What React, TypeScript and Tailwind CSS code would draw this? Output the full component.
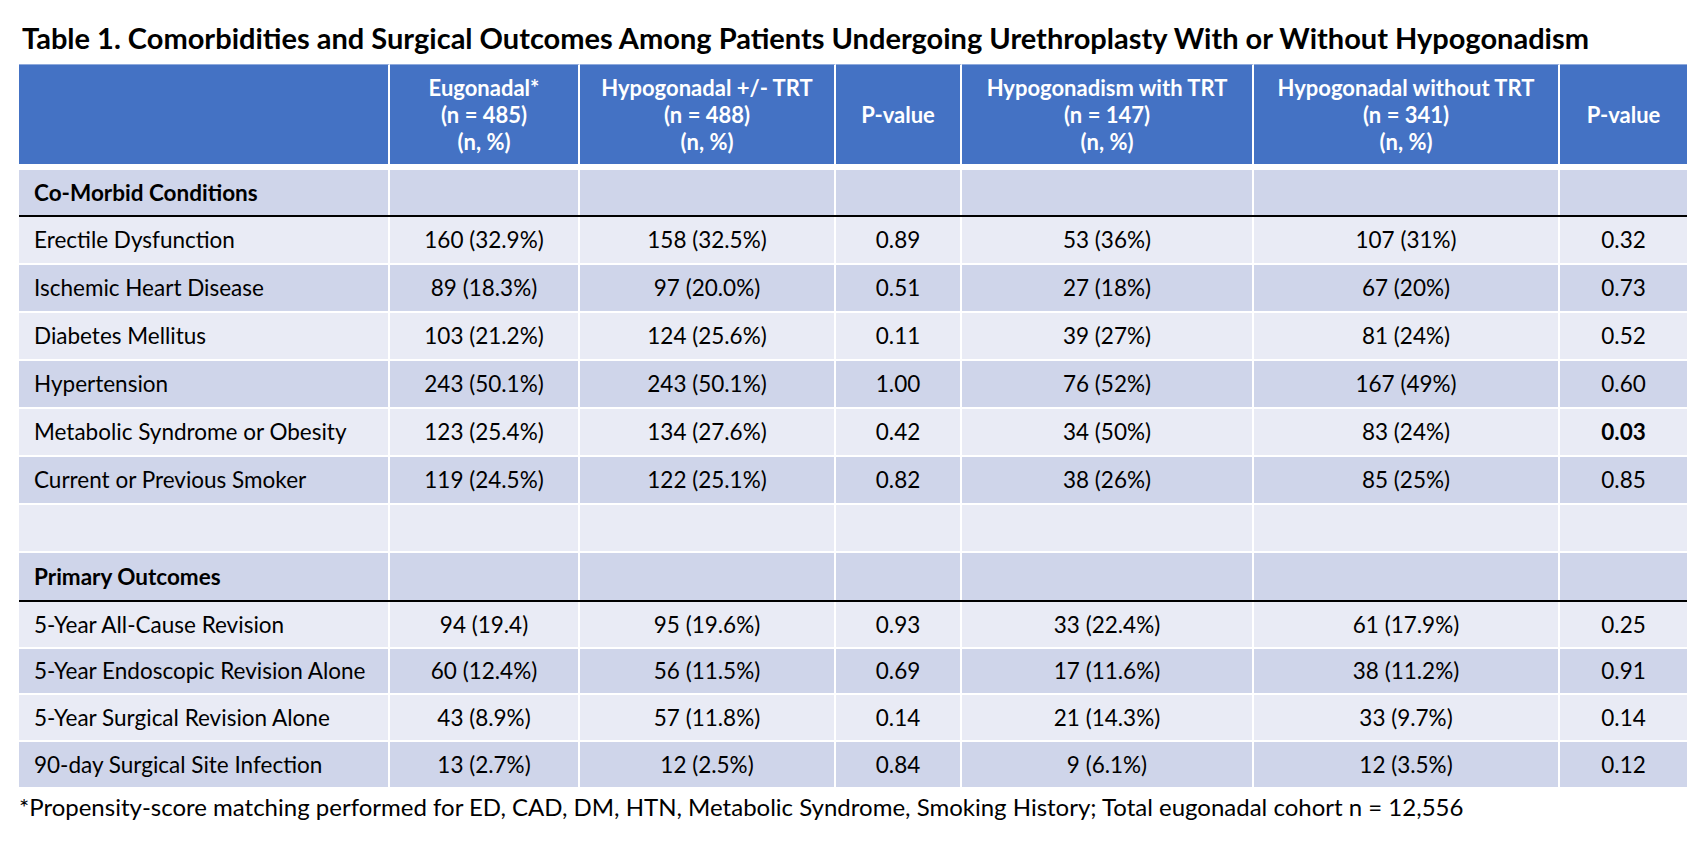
import * as React from "react";

// column widths taken off the reference, left to right
const COLS = ["w-[371px]", "w-[190px]", "w-[256px]", "w-[126px]", "w-[292px]", "w-[306px]", "w-[127px]"];

const HEADERS: string[][] = [
  [],
  ["Eugonadal*", "(n = 485)", "(n, %)"],
  ["Hypogonadal +/- TRT", "(n = 488)", "(n, %)"],
  ["P-value"],
  ["Hypogonadism with TRT", "(n = 147)", "(n, %)"],
  ["Hypogonadal without TRT", "(n = 341)", "(n, %)"],
  ["P-value"],
];

interface BodyRow {
  cells: string[];
  dark: boolean;
  height: string;
  section?: boolean; // bold label + black rule below
  boldLast?: boolean;
}

const ROWS: BodyRow[] = [
  { cells: ["Co-Morbid Conditions", "", "", "", "", "", ""], dark: true, height: "h-[47px]", section: true },
  { cells: ["Erectile Dysfunction", "160 (32.9%)", "158 (32.5%)", "0.89", "53 (36%)", "107 (31%)", "0.32"], dark: false, height: "h-[48px]" },
  { cells: ["Ischemic Heart Disease", "89 (18.3%)", "97 (20.0%)", "0.51", "27 (18%)", "67 (20%)", "0.73"], dark: true, height: "h-[48px]" },
  { cells: ["Diabetes Mellitus", "103 (21.2%)", "124 (25.6%)", "0.11", "39 (27%)", "81 (24%)", "0.52"], dark: false, height: "h-[48px]" },
  { cells: ["Hypertension", "243 (50.1%)", "243 (50.1%)", "1.00", "76 (52%)", "167 (49%)", "0.60"], dark: true, height: "h-[48px]" },
  { cells: ["Metabolic Syndrome or Obesity", "123 (25.4%)", "134 (27.6%)", "0.42", "34 (50%)", "83 (24%)", "0.03"], dark: false, height: "h-[48px]", boldLast: true },
  { cells: ["Current or Previous Smoker", "119 (24.5%)", "122 (25.1%)", "0.82", "38 (26%)", "85 (25%)", "0.85"], dark: true, height: "h-[48px]" },
  { cells: ["", "", "", "", "", "", ""], dark: false, height: "h-[48px]" },
  { cells: ["Primary Outcomes", "", "", "", "", "", ""], dark: true, height: "h-[49px]", section: true },
  { cells: ["5-Year All-Cause Revision", "94 (19.4)", "95 (19.6%)", "0.93", "33 (22.4%)", "61 (17.9%)", "0.25"], dark: false, height: "h-[47px]" },
  { cells: ["5-Year Endoscopic Revision Alone", "60 (12.4%)", "56 (11.5%)", "0.69", "17 (11.6%)", "38 (11.2%)", "0.91"], dark: true, height: "h-[46px]" },
  { cells: ["5-Year Surgical Revision Alone", "43 (8.9%)", "57 (11.8%)", "0.14", "21 (14.3%)", "33 (9.7%)", "0.14"], dark: false, height: "h-[47px]" },
  { cells: ["90-day Surgical Site Infection", "13 (2.7%)", "12 (2.5%)", "0.84", "9 (6.1%)", "12 (3.5%)", "0.12"], dark: true, height: "h-[45px]", },
];

function HeaderRow() {
  return (
    <div className="flex h-[106px] border-b-[6px] border-white">
      {HEADERS.map((lines, i) => (
        <div
          key={i}
          className={`${COLS[i]} flex flex-col items-center justify-center bg-[#4472c4] border-t border-t-[#8faadc] text-white font-bold text-[22px] leading-[27px] ${
            i < COLS.length - 1 ? "border-r-2 border-r-white" : ""
          }`}
        >
          {lines.map((l) => (
            <span key={l}>{l}</span>
          ))}
        </div>
      ))}
    </div>
  );
}

function DataRow({ row, last }: { row: BodyRow; last: boolean }) {
  const bg = row.dark ? "bg-[#cfd5ea]" : "bg-[#e9ebf5]";
  const rule = row.section ? "border-b-2 border-black" : last ? "" : "border-b-2 border-white";
  return (
    <div className={`flex ${row.height} ${rule}`}>
      {row.cells.map((c, i) => (
        <div
          key={i}
          className={`${COLS[i]} ${bg} flex items-center ${i === 0 ? "justify-start pl-[15px]" : "justify-center"} ${
            i < COLS.length - 1 ? "border-r-2 border-r-white" : ""
          } ${(row.section && i === 0) || (row.boldLast && i === 6) ? "font-bold" : ""}`}
        >
          {c}
        </div>
      ))}
    </div>
  );
}

export default function App() {
  return (
    <div className="w-[1704px] h-[844px] bg-white text-black font-[Lato,sans-serif] pl-[19px] pt-[20px]">
      <h1 className="pl-[3px] text-[29px] leading-[36px] font-bold mb-[8px]">
        Table 1. Comorbidities and Surgical Outcomes Among Patients Undergoing Urethroplasty With or Without Hypogonadism
      </h1>
      <div className="w-[1668px] text-[22.5px]">
        <HeaderRow />
        {ROWS.map((r, i) => (
          <DataRow key={i} row={r} last={i === ROWS.length - 1} />
        ))}
      </div>
      <p className="text-[24px] leading-[30px] mt-[5px]">
        *Propensity-score matching performed for ED, CAD, DM, HTN, Metabolic Syndrome, Smoking History; Total eugonadal cohort n = 12,556
      </p>
    </div>
  );
}
